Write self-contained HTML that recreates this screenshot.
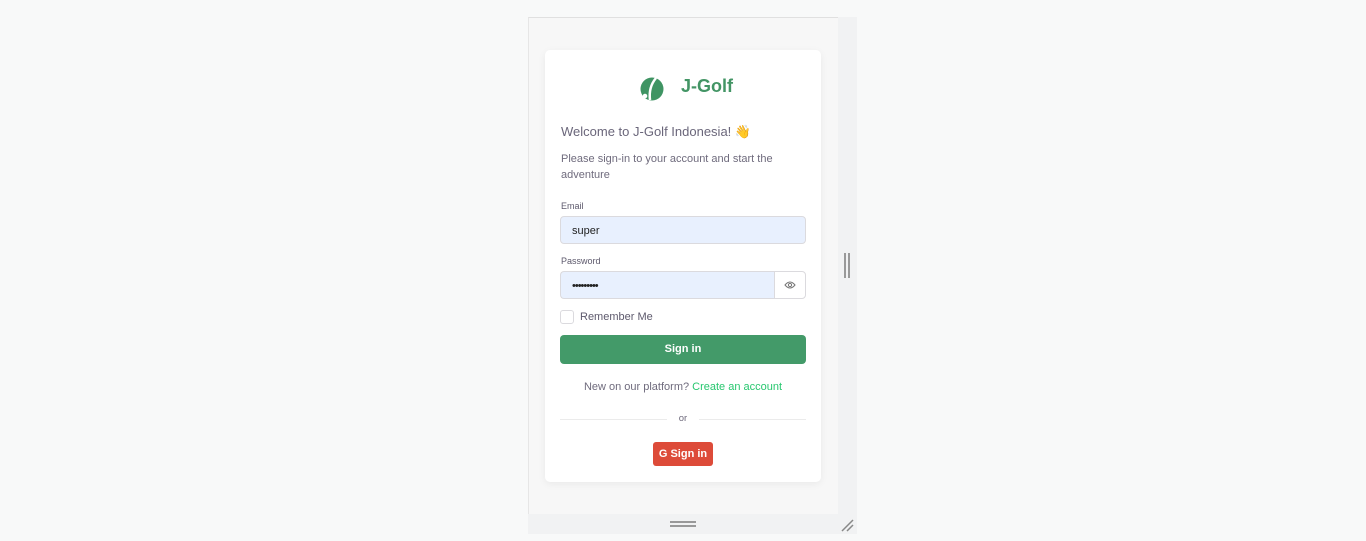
<!DOCTYPE html>
<html><head><style>
*{box-sizing:border-box;margin:0;padding:0}
body{width:1366px;height:541px;background:#f8f9f9;font-family:"Liberation Sans",sans-serif;position:relative;overflow:hidden}
.frame{position:absolute;left:528px;top:17px;width:310px;height:497px;background:#f7f7f7;border-top:1px solid #e0e0e0;border-left:1px solid #e6e6e6}
.rbar{position:absolute;left:838px;top:17px;width:19px;height:497px;background:#f1f2f3}
.bbar{position:absolute;left:528px;top:514px;width:329px;height:20px;background:#f1f2f3}
.card{position:absolute;left:545px;top:50px;width:276px;height:432px;background:#fff;border-radius:5px;box-shadow:0 2px 8px rgba(0,0,0,.06)}
.abs{position:absolute}
.lbl{font-size:9px;color:#5d596c}
.inp{position:absolute;left:15px;width:246px;height:28px;border:1px solid #dbdade;border-radius:4px;background:#e8f0fe;font-size:11px;color:#222;padding:8px 11px}
</style></head><body>
<div class="frame"></div>
<div class="rbar"><div class="abs" style="left:6px;top:236px;width:2px;height:25px;background:#999"></div><div class="abs" style="left:10px;top:236px;width:2px;height:25px;background:#999"></div></div>
<div class="bbar"><div class="abs" style="left:142px;top:7px;width:26px;height:2px;background:#999"></div><div class="abs" style="left:142px;top:11px;width:26px;height:2px;background:#999"></div>
<svg class="abs" style="left:312px;top:4px" width="14" height="14"><path d="M2 13L13 2M7 13L13 7" stroke="#888" stroke-width="1.5"/></svg></div>
<div class="card">
 <svg class="abs" style="left:95px;top:27px" width="24" height="24" viewBox="0 0 24 24"><circle cx="12" cy="12" r="11.5" fill="#3f9463"/><path d="M10 23C9 15 11 7 16 1" stroke="#fff" stroke-width="2.5" fill="none"/><circle cx="5" cy="19" r="2.3" fill="#fff"/></svg>
 <div class="abs" style="left:136px;top:26px;font-size:18px;font-weight:bold;color:#439565">J-Golf</div>
 <div class="abs" style="left:16px;top:74px;font-size:13px;color:#6a667a">Welcome to J-Golf Indonesia! 👋</div>
 <div class="abs" style="left:16px;top:101px;font-size:11px;line-height:16px;color:#6f6b7d;width:230px">Please sign-in to your account and start the adventure</div>
 <div class="abs lbl" style="left:16px;top:151px">Email</div>
 <div class="inp" style="top:166px">super</div>
 <div class="abs lbl" style="left:16px;top:206px">Password</div>
 <div class="inp" style="top:221px;border-radius:4px 0 0 4px;width:215px;border-right:none;letter-spacing:-1px">•••••••••</div>
 <div class="abs" style="left:229px;top:221px;width:32px;height:28px;border:1px solid #dbdade;border-radius:0 4px 4px 0;background:#fff"><svg class="abs" style="left:9px;top:8px" width="12" height="10" viewBox="0 0 12 10"><path d="M1 5Q6 -1 11 5Q6 11 1 5Z" fill="none" stroke="#777" stroke-width="1"/><circle cx="6" cy="5" r="1.6" fill="none" stroke="#777"/></svg></div>
 <div class="abs" style="left:15px;top:260px;width:14px;height:14px;border:1px solid #dbdade;border-radius:3px"></div>
 <div class="abs" style="left:35px;top:261px;font-size:11px;color:#5d596c">Remember Me</div>
 <div class="abs" style="left:15px;top:285px;width:246px;height:29px;background:#439a69;border-radius:4px;color:#fff;font-size:11px;font-weight:bold;text-align:center;line-height:29px">Sign in</div>
 <div class="abs" style="left:0;top:331px;width:276px;text-align:center;font-size:11px;color:#6f6b7d">New on our platform? <span style="color:#28c76f">Create an account</span></div>
 <div class="abs" style="left:15px;top:369px;width:107px;height:1px;background:#ebebeb"></div>
 <div class="abs" style="left:154px;top:369px;width:107px;height:1px;background:#ebebeb"></div>
 <div class="abs" style="left:0;top:363px;width:276px;text-align:center;font-size:9.5px;color:#6f6b7d">or</div>
 <div class="abs" style="left:108px;top:392px;width:60px;height:24px;background:#dd4b39;border-radius:3px;color:#fff;font-size:11px;font-weight:bold;line-height:24px;text-align:center">G Sign in</div>
</div>
</body></html>
